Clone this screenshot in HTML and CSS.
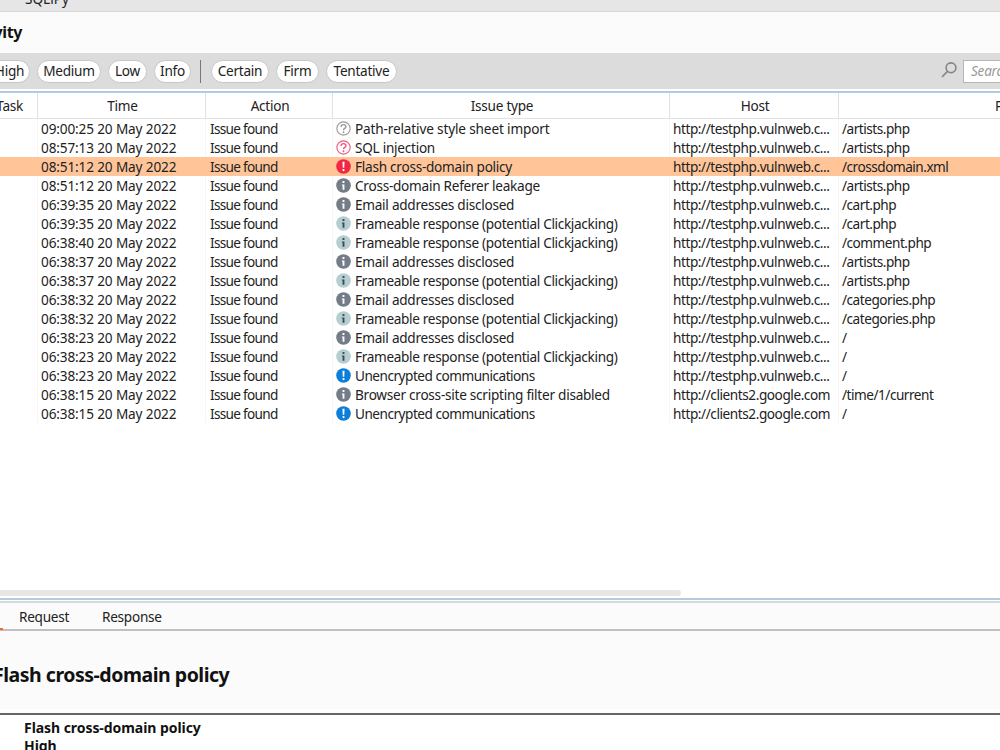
FILE: index.html
```html
<!DOCTYPE html>
<html lang="en">
<head>
  <meta charset="UTF-8">
  <title>Issue activity</title>
  <link rel="stylesheet" href="styles.css">
</head>
<body>

  <!-- Icons -->
  <svg class="sprite">
    <symbol id="question" viewBox="0 0 16 16">
      <circle cx="8" cy="8" r="7.1" fill="#fff" stroke="currentColor" stroke-width="1.2"/>
      <path d="M5.4 6.3C5.4 3 10.6 3.1 10.6 6C10.6 8 8 7.8 8 9.8" fill="none" stroke="currentColor" stroke-width="1.5"/>
      <circle cx="8" cy="12" r="1" fill="currentColor"/>
    </symbol>
    <symbol id="alert" viewBox="0 0 16 16">
      <circle cx="8" cy="8" r="7.8" fill="currentColor"/>
      <path d="M6.9 3h2.2l-.3 6.3H7.2z" fill="#fff"/>
      <circle cx="8" cy="11.8" r="1.2" fill="#fff"/>
    </symbol>
    <symbol id="info" viewBox="0 0 16 16">
      <circle cx="8" cy="8" r="7.8" fill="currentColor"/>
      <path class="glyph" d="M7 3.2h2v2H7zM6.2 6.8H9v5.6H7V8h-.8z"/>
    </symbol>
  </svg>

  <div class="app">
    <div class="tabs"><span>SQLiPy</span></div>
    <div class="title"><h2>Issue activity</h2></div>

    <!-- Filters -->
    <div class="filters">
      <div class="group severity">
        <span class="pill high">High</span>
        <span class="pill medium">Medium</span>
        <span class="pill low">Low</span>
        <span class="pill info">Info</span>
      </div>
      <div class="group confidence">
        <span class="pill certain">Certain</span>
        <span class="pill firm">Firm</span>
        <span class="pill tentative">Tentative</span>
      </div>
      <svg class="search-icon" viewBox="0 0 16 16"><circle cx="10" cy="5.8" r="4.9"/><path d="M6.4 9.4L1 15"/></svg>
      <div class="search">Search...</div>
    </div>

    <!-- Issues table -->
    <div class="table-container">
      <table id="issuesTable">
        <colgroup>
          <col class="c-task"><col class="c-time"><col class="c-action"><col class="c-type"><col class="c-host"><col class="c-path">
        </colgroup>
        <thead>
          <tr>
            <th>Task</th>
            <th>Time</th>
            <th>Action</th>
            <th>Issue type</th>
            <th>Host</th>
            <th>Path</th>
          </tr>
        </thead>
        <tbody></tbody>
      </table>
      <div class="scrollbar"></div>
    </div>

    <!-- Selected issue -->
    <div class="detail-tabs">
      <span class="tab active">Advisory</span>
      <span class="tab request">Request</span>
      <span class="tab response">Response</span>
    </div>
    <div class="detail-title"><h1>Flash cross-domain policy</h1></div>
    <div class="detail">
      <p>Flash cross-domain policy</p>
      <p>High</p>
    </div>
  </div>

  <script>
    const vuln = 'http://testphp.vulnweb.c...';
    const google = 'http://clients2.google.com';
    const issues = [
      ['09:00:25', 'question', 'grey', 'Path-relative style sheet import', vuln, '/artists.php'],
      ['08:57:13', 'question', 'pink', 'SQL injection', vuln, '/artists.php'],
      ['08:51:12', 'alert', 'red', 'Flash cross-domain policy', vuln, '/crossdomain.xml'],
      ['08:51:12', 'info', 'slate', 'Cross-domain Referer leakage', vuln, '/artists.php'],
      ['06:39:35', 'info', 'slate', 'Email addresses disclosed', vuln, '/cart.php'],
      ['06:39:35', 'info', 'pale', 'Frameable response (potential Clickjacking)', vuln, '/cart.php'],
      ['06:38:40', 'info', 'pale', 'Frameable response (potential Clickjacking)', vuln, '/comment.php'],
      ['06:38:37', 'info', 'slate', 'Email addresses disclosed', vuln, '/artists.php'],
      ['06:38:37', 'info', 'pale', 'Frameable response (potential Clickjacking)', vuln, '/artists.php'],
      ['06:38:32', 'info', 'slate', 'Email addresses disclosed', vuln, '/categories.php'],
      ['06:38:32', 'info', 'pale', 'Frameable response (potential Clickjacking)', vuln, '/categories.php'],
      ['06:38:23', 'info', 'slate', 'Email addresses disclosed', vuln, '/'],
      ['06:38:23', 'info', 'pale', 'Frameable response (potential Clickjacking)', vuln, '/'],
      ['06:38:23', 'alert', 'blue', 'Unencrypted communications', vuln, '/'],
      ['06:38:15', 'info', 'slate', 'Browser cross-site scripting filter disabled', google, '/time/1/current'],
      ['06:38:15', 'alert', 'blue', 'Unencrypted communications', google, '/']
    ];
    const selected = 2;

    const tableBody = document.querySelector('#issuesTable tbody');
    issues.forEach(([time, icon, color, type, host, path], i) => {
      const row = tableBody.insertRow();
      if (i === selected) row.className = 'selected';
      row.innerHTML = `<td></td>
        <td class="time">${time} 20 May 2022</td>
        <td class="action">Issue found</td>
        <td class="type"><div class="${color}"><svg class="icon"><use href="#${icon}"/></svg><span>${type}</span></div></td>
        <td class="host">${host}</td>
        <td class="path">${path}</td>`;
    });
  </script>

</body>
</html>
```
FILE: styles.css
```css
* {
  box-sizing: border-box;
}
body {
  margin: 0;
  height: 750px;
  overflow: hidden;
  background: #fff;
  color: #222;
  font-family: "Noto Sans", sans-serif;
  font-size: 13.6px;
  letter-spacing: -0.26px;
}
h1, h2, p {
  margin: 0;
}
.sprite {
  display: none;
}
/* the window runs past both sides of the viewport */
.app {
  width: 1280px;
  height: 750px;
  margin-left: -100px;
  display: flex;
  flex-direction: column;
  overflow: hidden;
}
.app > div {
  flex: none;
}
.tabs {
  height: 12px;
  padding-left: 125px;
  display: flex;
  align-items: flex-end;
  background: #e6e6e6;
  border-bottom: 1px solid #d6d6d6;
  overflow: hidden;
}
.tabs span {
  line-height: 18px;
  margin-bottom: 3px;
  letter-spacing: 0;
}
.title {
  height: 41px;
  padding-right: 1158px;
  display: flex;
  align-items: center;
  justify-content: flex-end;
  background: #fbfbfb;
}
h2 {
  padding-bottom: 2px;
  color: #111;
  font-size: 16px;
  letter-spacing: -0.4px;
  white-space: nowrap;
}
.filters {
  height: 36px;
  display: flex;
  align-items: center;
  background: #dcdcdc;
}
.group {
  display: flex;
  gap: 7px;
}
.severity {
  width: 301px;
  padding-left: 74px;
  border-right: 1px solid #777;
}
.confidence {
  margin-left: 10px;
}
.pill {
  height: 23px;
  line-height: 20px;
  border: 1px solid #c6c6c6;
  border-radius: 12px;
  background: #fff;
  text-align: center;
}
.high {
  width: 56px;
  padding-left: 15px;
}
.medium {
  width: 64px;
}
.low {
  width: 39px;
}
.info {
  width: 37px;
}
.certain {
  width: 58px;
}
.firm {
  width: 43px;
}
.tentative {
  width: 71px;
}
.search-icon {
  width: 16px;
  height: 16px;
  margin-left: 544px;
  margin-bottom: 2px;
  fill: none;
  stroke: #858585;
  stroke-width: 1.6;
}
.search {
  flex: 1;
  height: 23px;
  margin-left: 6px;
  padding-left: 7px;
  line-height: 20px;
  border: 1px solid #b5b5b5;
  background: #fff;
  color: #999;
  font-style: italic;
}
.table-container {
  height: 509px;
  margin-top: 2px;
  display: flex;
  flex-direction: column;
  border-top: 2px solid #b4cbdf;
  border-bottom: 2px solid #b4cbdf;
}
table {
  width: 1280px;
  table-layout: fixed;
  border-collapse: separate;
  border-spacing: 0;
}
.c-task {
  width: 138px;
}
.c-time {
  width: 168px;
}
.c-action {
  width: 127px;
}
.c-type {
  width: 337px;
}
.c-host {
  width: 169px;
}
th {
  height: 26px;
  padding: 1px 0 0 2px;
  line-height: 24px;
  border-right: 1px solid #e2e2e2;
  border-bottom: 1px solid #e2e2e2;
  font-weight: normal;
}
th:first-child {
  padding-right: 14px;
  text-align: right;
}
th:last-child {
  padding-left: 0;
}
td {
  height: 19px;
  padding: 0 0 0 3px;
  line-height: 19px;
  border-right: 1px solid #f6f6f6;
  white-space: nowrap;
}
.selected td {
  background: #ffc599;
  border-color: #ffc599;
}
.time {
  letter-spacing: -0.14px;
}
.action {
  padding-left: 4px;
  letter-spacing: -0.7px;
}
.host {
  letter-spacing: -0.43px;
}
.path {
  letter-spacing: -0.48px;
}
.type div {
  display: flex;
  align-items: center;
  gap: 4px;
}
.type span {
  color: #222;
}
.icon {
  width: 15px;
  height: 15px;
}
.glyph {
  fill: var(--glyph, #fff);
}
.grey {
  color: #999;
  letter-spacing: -0.15px;
}
.pink {
  color: #f0587a;
}
.red {
  color: #f22746;
}
.slate {
  color: #737c87;
}
.pale {
  color: #b5ced2;
  letter-spacing: -0.33px;
  --glyph: #3f494c;
}
.blue {
  color: #0d7fd8;
  letter-spacing: -0.49px;
}
.scrollbar {
  width: 781px;
  height: 6px;
  margin-top: auto;
  margin-bottom: 2px;
  border-radius: 3px;
  background: #e6e6e6;
}
.detail-tabs {
  height: 30px;
  margin-top: 1px;
  display: flex;
  border-top: 2px solid #d8d8d8;
  border-bottom: 2px solid #c0c0c0;
  background: #fbfbfb;
}
.tab {
  line-height: 27px;
}
.active {
  width: 103px;
  height: 27px;
  border-bottom: 2px solid #f0683c;
}
.request {
  width: 49px;
  margin-left: 16px;
}
.response {
  margin-left: 34px;
}
.detail-title {
  height: 78px;
  padding: 30px 0 0 93px;
  background: #fbfbfb;
}
h1 {
  color: #111;
  font-size: 19.5px;
  letter-spacing: -0.48px;
  line-height: 27px;
}
.detail {
  height: 37px;
  margin-top: 4px;
  padding: 4px 0 0 124px;
  border-top: 2px solid #666;
  color: #111;
  font-size: 14px;
  font-weight: bold;
  letter-spacing: -0.06px;
  line-height: 18px;
  overflow: hidden;
}
```
